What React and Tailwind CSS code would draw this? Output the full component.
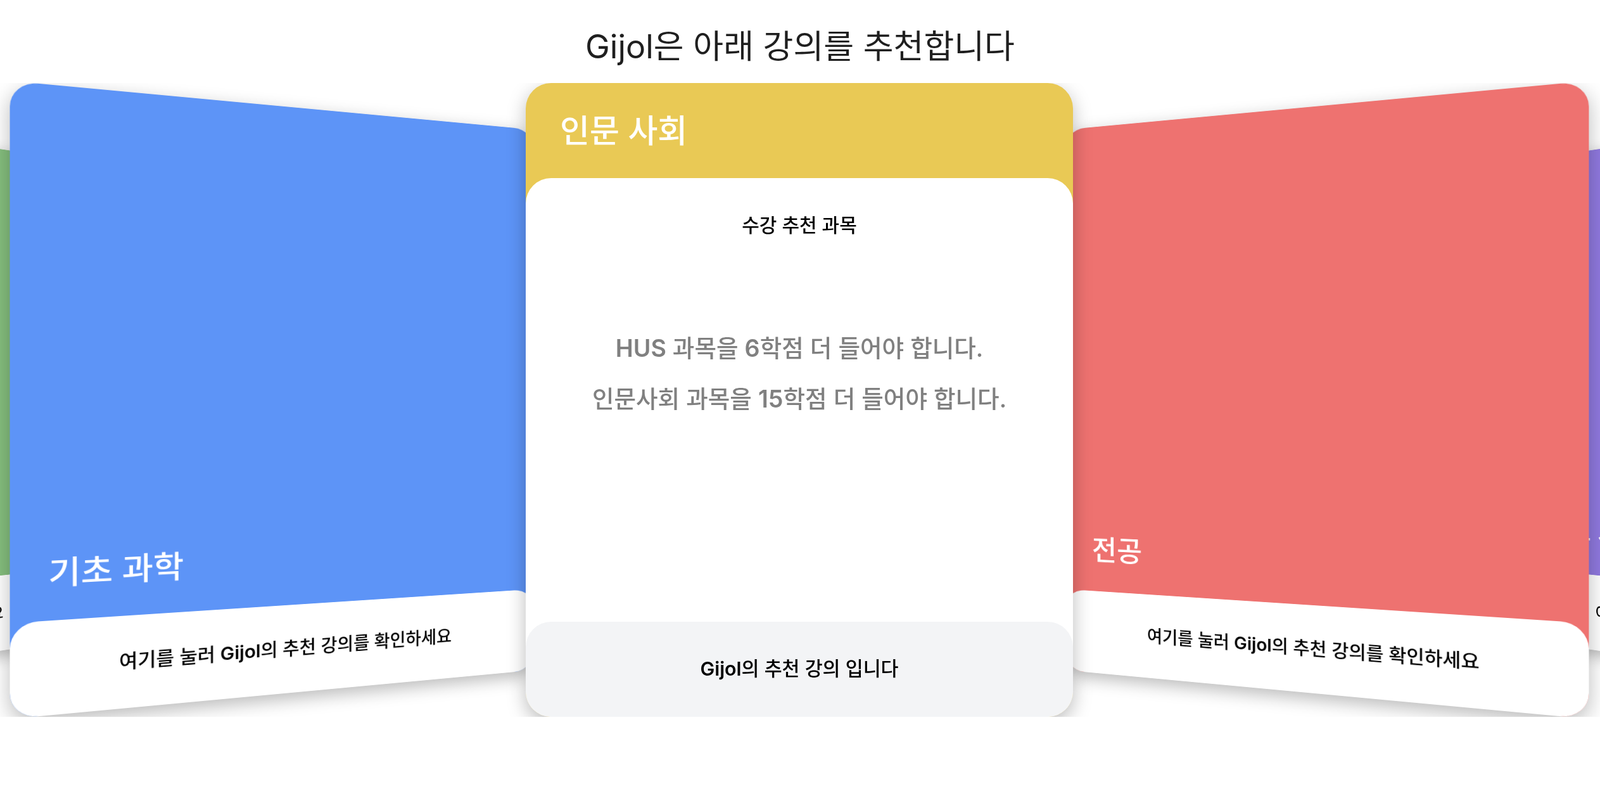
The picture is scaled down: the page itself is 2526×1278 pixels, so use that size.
const fontStack = 'font-["Inter","Noto_Sans_CJK_KR",sans-serif]';
const cardShadow = 'shadow-[0_10px_30px_rgba(0,0,0,0.27)]';

function Latin({ children }) {
  return <span className="font-semibold">{children}</span>;
}

function SideCard({ title, color, position }) {
  return (
    <div className={`flex h-[1000px] w-[864px] shrink-0 flex-col justify-end rounded-[40px] ${cardShadow} ${color} ${position}`}>
      <h2 className="px-[54px] pb-[50px] text-[51px] leading-none font-medium text-white">{title}</h2>
      <div className="flex h-[150px] items-center justify-center rounded-[40px] bg-white text-[30.2px] font-medium text-black">
        <p>여기를 눌러 <Latin>Gijol</Latin>의 추천 강의를 확인하세요</p>
      </div>
    </div>
  );
}

function ActiveCard() {
  return (
    <div className={`z-20 flex h-[1000px] w-[864px] shrink-0 flex-col rounded-[40px] bg-[#e9c955] ${cardShadow}`}>
      <h2 className="flex h-[150px] items-center px-[54px] text-[51px] leading-none font-medium text-white">인문 사회</h2>
      <div className="flex flex-1 flex-col rounded-[40px] bg-white">
        <h3 className="pt-14 text-center text-[30px] leading-9 font-medium text-black">수강 추천 과목</h3>
        <div className="mt-[137px] flex-1 text-center text-[37.6px] leading-[80px] font-medium text-[#808080]">
          <p><Latin>HUS</Latin> 과목을 <Latin>6</Latin>학점 더 들어야 합니다.</p>
          <p>인문사회 과목을 <Latin>15</Latin>학점 더 들어야 합니다.</p>
        </div>
        <div className="flex h-[150px] items-center justify-center rounded-[40px] bg-gray-100 text-[30.4px] font-medium text-black">
          <p><Latin>Gijol</Latin>의 추천 강의 입니다</p>
        </div>
      </div>
    </div>
  );
}

export default function App() {
  return (
    <div className={`min-h-screen bg-white ${fontStack}`}>
      <h1 className="h-[131px] pt-[48px] text-center text-[52px] leading-none font-normal text-[#1f1f1f]">
        Gijol은 아래 강의를 추천합니다
      </h1>
      <div className="flex h-[1000px] justify-center overflow-hidden pr-[2px] perspective-[2400px]">
        <SideCard title="교양" color="bg-[#85bf7e]" position="z-0 [transform:translateZ(-400px)_rotateY(60deg)]" />
        <SideCard title="기초 과학" color="bg-[#5d94f7]" position="z-10 [transform:translateZ(-200px)_rotateY(30deg)]" />
        <ActiveCard />
        <SideCard title="전공" color="bg-[#ee7270]" position="z-10 [transform:translateZ(-200px)_rotateY(-30deg)]" />
        <SideCard title="자유 선택" color="bg-[#9079e0]" position="z-0 [transform:translateZ(-400px)_rotateY(-60deg)]" />
      </div>
    </div>
  );
}
